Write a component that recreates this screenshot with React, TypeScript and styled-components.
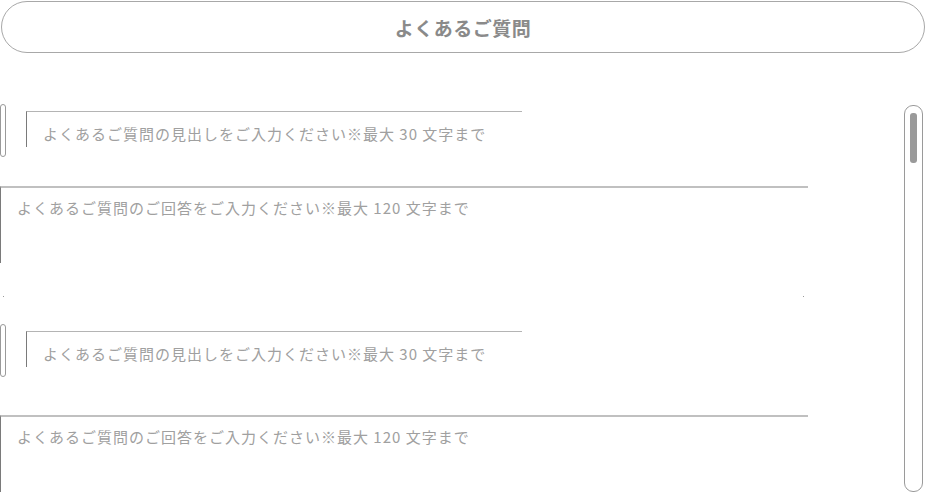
import React from 'react'
import styled, { createGlobalStyle } from 'styled-components'

const GlobalStyle = createGlobalStyle`
  html, body {
    margin: 0;
    padding: 0;
    background: #fff;
    overflow: hidden;
  }
  body {
    font-family: "Noto Sans CJK JP", "Noto Sans", sans-serif;
  }
`

const Page = styled.div`
  width: 932px;
  height: 494px;
  padding: 1px 0 0 1px;
  box-sizing: border-box;
  overflow: hidden;
`

const TitleBar = styled.div`
  width: 924px;
  height: 52px;
  box-sizing: border-box;
  border: 1px solid #a8a8a8;
  border-radius: 26px;
  display: flex;
  align-items: center;
  justify-content: center;
  font-size: 19px;
  font-weight: 700;
  color: #8a8a8a;
  letter-spacing: 0.5px;
`

const Body = styled.div`
  display: flex;
  margin-top: 51px;
`

const List = styled.div`
  width: 807px;
  display: flex;
  flex-direction: column;
  gap: 27px;
`

const Item = styled.div`
  display: flex;
  flex-direction: column;
`

const HeadingRow = styled.div`
  display: flex;
  height: 53px;
  margin-left: -1px;
`

const Handle = styled.div`
  width: 6px;
  height: 53px;
  box-sizing: border-box;
  border: 1px solid #9a9a9a;
  border-radius: 3px;
`

const HeadingInput = styled.input`
  margin: 7px 0 0 20px;
  width: 496px;
  height: 36px;
  box-sizing: border-box;
  border: none;
  border-top: 1px solid #b4b4b4;
  border-left: 1px solid #7a7a7a;
  outline: none;
  padding: 8px 0 0 16px;
  font-family: inherit;
  font-size: 15px;
  letter-spacing: 1px;
  background: transparent;
  &::placeholder {
    color: #a0a0a0;
  }
`

const AnswerInput = styled.textarea<{ $gap: number }>`
  margin: ${(p) => p.$gap}px 0 0 -1px;
  width: 808px;
  height: 77px;
  box-sizing: border-box;
  border: none;
  border-top: 2px solid #c0c0c0;
  border-left: 1px solid #7a7a7a;
  outline: none;
  resize: none;
  padding: 9px 0 0 16px;
  font-family: inherit;
  font-size: 15px;
  line-height: 22px;
  letter-spacing: 1px;
  background: transparent;
  overflow: hidden;
  &::placeholder {
    color: #a0a0a0;
  }
`

const CornerRow = styled.div`
  display: flex;
  justify-content: space-between;
  margin-top: 33px;
  padding: 0 4px 0 2px;
  height: 1px;
`

const Dot = styled.span`
  width: 1px;
  height: 1px;
  background: #9a9a9a;
`

const ScrollTrack = styled.div`
  margin: 1px 0 0 96px;
  width: 19px;
  height: 387px;
  box-sizing: border-box;
  border: 1px solid #9a9a9a;
  border-radius: 9px;
  padding: 7px 0 0 5px;
`

const ScrollThumb = styled.div`
  width: 7px;
  height: 50px;
  border-radius: 3px;
  background: #9a9a9a;
`

const items = [
  { id: 1, gap: 29 },
  { id: 2, gap: 38 },
]

export default function App() {
  return (
    <Page>
      <GlobalStyle />
      <TitleBar>よくあるご質問</TitleBar>
      <Body>
        <List>
          {items.map((item) => (
            <Item key={item.id}>
              <HeadingRow>
                <Handle />
                <HeadingInput placeholder="よくあるご質問の見出しをご入力ください※最大 30 文字まで" />
              </HeadingRow>
              <AnswerInput
                $gap={item.gap}
                placeholder="よくあるご質問のご回答をご入力ください※最大 120 文字まで"
              />
              <CornerRow>
                <Dot />
                <Dot />
              </CornerRow>
            </Item>
          ))}
        </List>
        <ScrollTrack>
          <ScrollThumb />
        </ScrollTrack>
      </Body>
    </Page>
  )
}
